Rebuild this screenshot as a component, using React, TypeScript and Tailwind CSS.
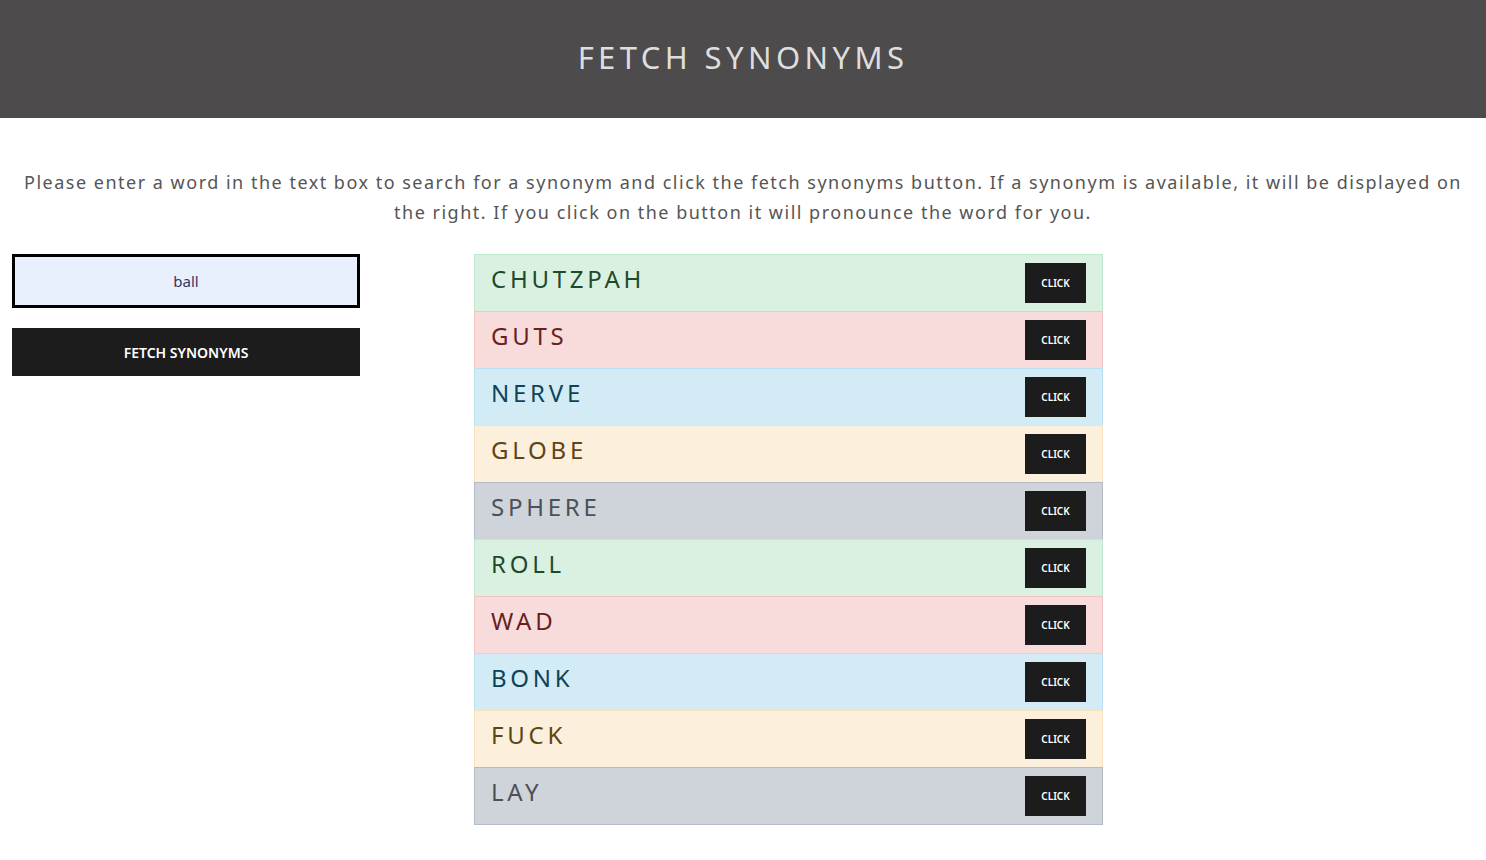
import React from "react";

const rows = [
  { w: "CHUTZPAH", bg: "bg-[#daf1e1]", bd: "border-[#bfe8cc]", tx: "text-[#1e4a2c]" },
  { w: "GUTS", bg: "bg-[#f8dbdb]", bd: "border-[#f3c4c4]", tx: "text-[#6b1f1f]" },
  { w: "NERVE", bg: "bg-[#d3ebf5]", bd: "border-[#b8e0f1]", tx: "text-[#0d4459]" },
  { w: "GLOBE", bg: "bg-[#fcefdc]", bd: "border-[#f8e1bf]", tx: "text-[#5e4516]" },
  { w: "SPHERE", bg: "bg-[#cfd3da]", bd: "border-[#b6bcc5]", tx: "text-[#4c5158]" },
  { w: "ROLL", bg: "bg-[#daf1e1]", bd: "border-[#bfe8cc]", tx: "text-[#1e4a2c]" },
  { w: "WAD", bg: "bg-[#f8dbdb]", bd: "border-[#f3c4c4]", tx: "text-[#6b1f1f]" },
  { w: "BONK", bg: "bg-[#d3ebf5]", bd: "border-[#b8e0f1]", tx: "text-[#0d4459]" },
  { w: "FUCK", bg: "bg-[#fcefdc]", bd: "border-[#f8e1bf]", tx: "text-[#5e4516]" },
  { w: "LAY", bg: "bg-[#cfd3da]", bd: "border-[#b6bcc5]", tx: "text-[#4c5158]" },
];

export default function App() {
  return (
    <div className="min-h-[860px] bg-white" style={{ fontFamily: '"Noto Sans", "Open Sans", sans-serif' }}>
      <header className="h-[118px] bg-[#4d4b4c] flex items-center justify-center">
        <h1 className="text-[31px] tracking-[4.4px] text-[#dedede] font-normal leading-none pb-[4px]">FETCH SYNONYMS</h1>
      </header>
      <p className="mt-[49px] px-[20px] text-center text-[18px] leading-[30px] tracking-[1.5px] text-[#555555]">
        Please enter a word in the text box to search for a synonym and click the fetch synonyms button. If a synonym is available, it will be displayed on the right. If you click on the button it will pronounce the word for you.
      </p>
      <div className="flex mt-[27px]">
        <div className="ml-[12px] w-[348px] flex flex-col">
          <div className="h-[54px] border-[3px] border-black bg-[#e8f0fe] flex items-center justify-center text-[15px] text-[#2a3a66]">
            ball
          </div>
          <div className="mt-[20px] h-[48px] bg-[#1c1c1c] flex items-center justify-center text-white text-[14px] font-semibold tracking-[0px]">
            FETCH SYNONYMS
          </div>
        </div>
        <div className="ml-[114px] w-[629px] flex flex-col">
          {rows.map((r) => (
            <div key={r.w} className={`h-[58px] border ${r.bg} ${r.bd} flex items-start justify-between pl-[16px] pr-[16px] -mt-px first:mt-0`}>
              <span className={`mt-[9px] text-[24px] leading-[30px] tracking-[3.75px] ${r.tx}`}>{r.w}</span>
              <span className="mt-[8px] w-[61px] h-[40px] bg-[#1c1c1c] text-white text-[10px] font-semibold tracking-[0px] flex items-center justify-center">
                CLICK
              </span>
            </div>
          ))}
        </div>
      </div>
    </div>
  );
}
